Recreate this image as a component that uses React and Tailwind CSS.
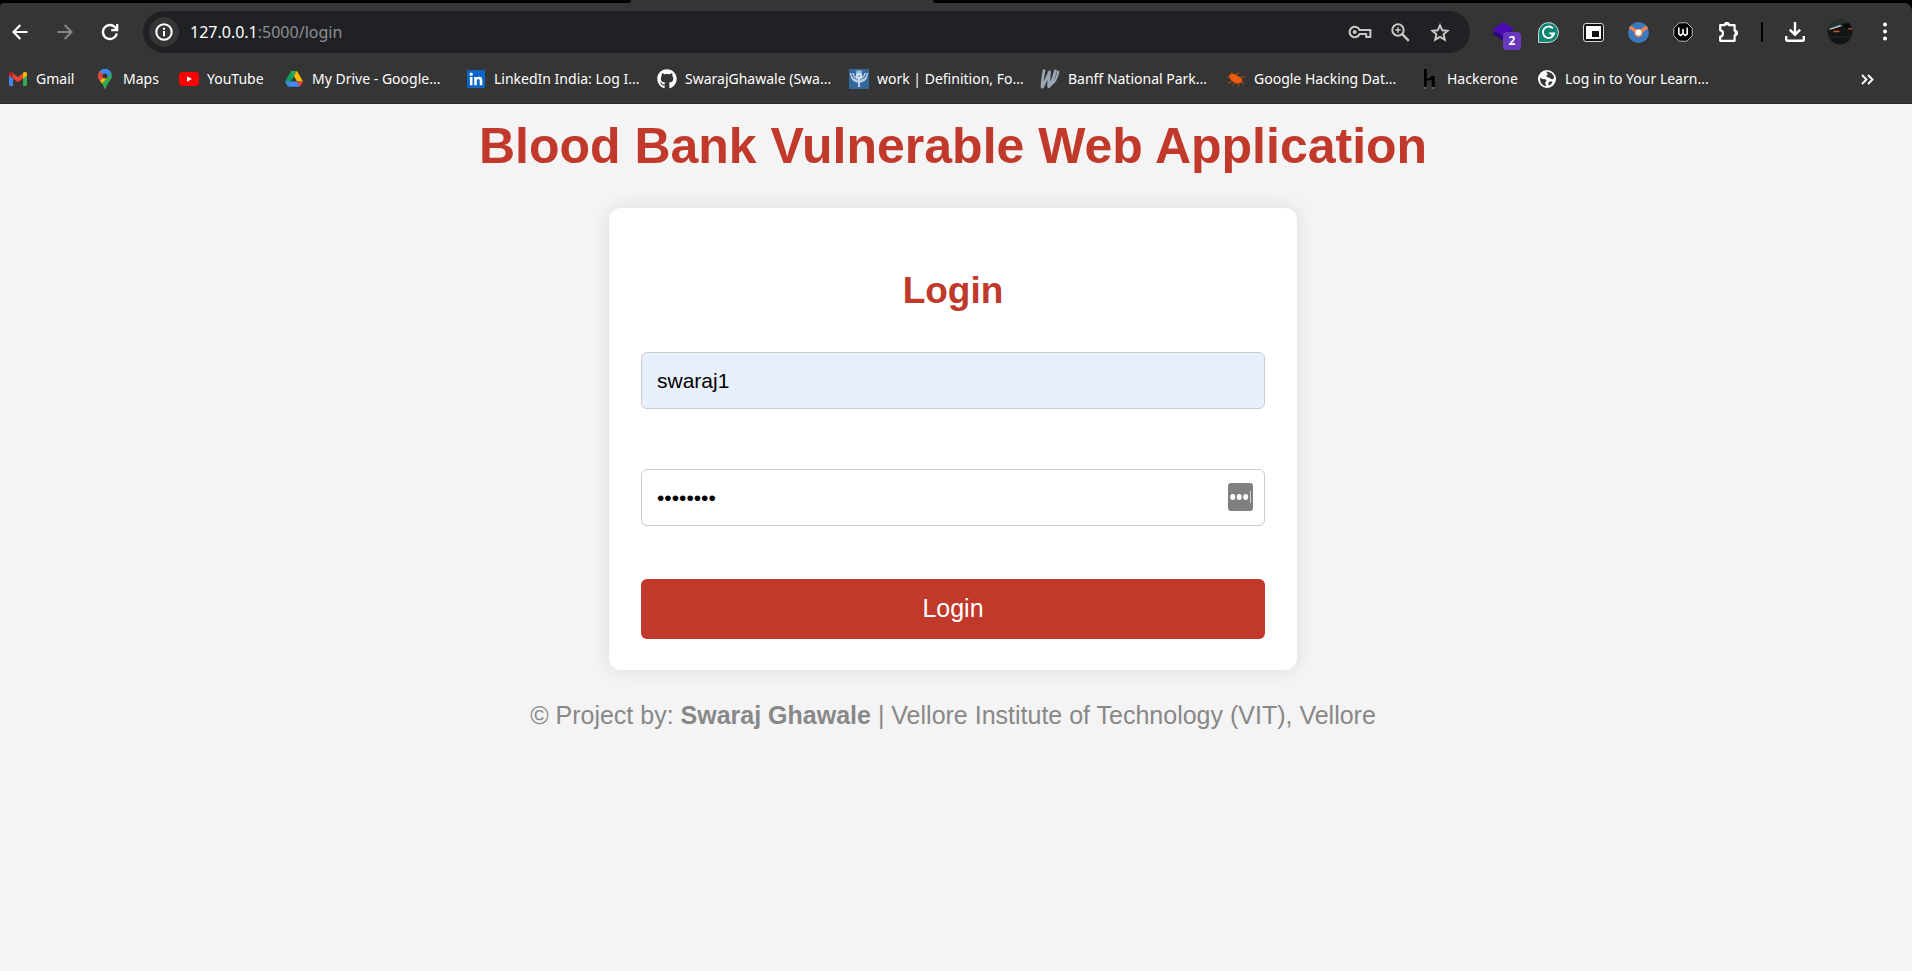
import React from "react";
import { FaGithub } from "react-icons/fa";

const BackIcon = () => (
  <svg width="16" height="16" viewBox="0 0 16 16" fill="none" stroke="#fff" strokeWidth="2.100">
    <path d="M15.500 8H2M8.300 1L1.400 8L8.300 15" />
  </svg>
);

const ForwardIcon = () => (
  <svg width="16" height="16" viewBox="0 0 16 16" fill="none" stroke="#868686" strokeWidth="2.100">
    <path d="M.5 8H14M7.700 1L14.600 8L7.700 15" />
  </svg>
);

const ReloadIcon = () => (
  <svg width="18" height="18" viewBox="0 0 18 18" fill="none" stroke="#fff" strokeWidth="2.400">
    <path d="M15.800 10.500A7 7 0 1 1 14.600 4.800L16 6.500" />
    <path d="M16.200 1V7.200H10.200" strokeWidth="2.200" />
  </svg>
);

const InfoIcon = () => (
  <svg width="18" height="18" viewBox="0 0 18 18" fill="none" stroke="#fff" strokeWidth="2">
    <circle cx="9" cy="9" r="7.700" />
    <path d="M9 8V13.200M9 4.700V6.700" />
  </svg>
);

const ZoomIcon = () => (
  <svg width="19" height="19" viewBox="0 0 19 19" fill="none" stroke="#c7c7c7" strokeWidth="2">
    <circle cx="7" cy="7" r="5.700" />
    <path d="M11.200 11.200L17.800 17.800" strokeWidth="2.400" />
    <path d="M7 4.300V9.700M4.300 7H9.700" strokeWidth="1.500" />
  </svg>
);

const StarIcon = () => (
  <svg width="20" height="19" viewBox="0 0 20 19" fill="none" stroke="#c7c7c7" strokeWidth="2">
    <path d="M10 2.300L12.300 7.300L17.500 7.800L13.600 11.300L14.800 16.700L10 13.800L5.200 16.700L6.400 11.300L2.500 7.800L7.700 7.300Z" />
  </svg>
);

const MenuIcon = () => (
  <svg width="6" height="20" viewBox="0 0 6 20" fill="#fff">
    <circle cx="3" cy="2.500" r="2" />
    <circle cx="3" cy="9.500" r="2" />
    <circle cx="3" cy="16.500" r="2" />
  </svg>
);

const KeyIcon = () => (
  <svg width="24" height="14" viewBox="0 0 24 14" fill="none" stroke="#c7c7c7" strokeWidth="2.100">
    <path d="M11.600 5H22.400V12H18.200V9H11.600A5.200 5.200 0 1 1 11.600 5Z" strokeLinejoin="round" />
    <circle cx="6.700" cy="7" r="2" fill="#c7c7c7" stroke="none" />
  </svg>
);

const GmailIcon = () => (
  <svg width="18" height="14" viewBox="0 0 18 14">
    <path d="M0 2.200V12.800C0 13.500.5 14 1.200 14H4V6.200Z" fill="#4285f4" />
    <path d="M18 2.200V12.800C18 13.500 17.500 14 16.800 14H14V6.200Z" fill="#34a853" />
    <path d="M14 1.500V6.600L18 3.600V2C18 .1 15.900-.8 14.400.4Z" fill="#fbbc04" />
    <path d="M4 6.600V1.300L9 5L14 1.300V6.600L9 10.300Z" fill="#ea4335" />
    <path d="M0 2V3.600L4 6.600V1.300L3.600.4C2.100-.8 0 .1 0 2Z" fill="#c5221f" />
  </svg>
);

const MapsIcon = () => (
  <svg width="14" height="20" viewBox="0 0 14 20">
    <defs>
      <clipPath id="pin">
        <path d="M7 0A7 7 0 0 0 0 7C0 11 4.500 13 5.900 18.500C6.200 20.300 7.800 20.300 8.100 18.500C9.500 13 14 11 14 7A7 7 0 0 0 7 0Z" />
      </clipPath>
    </defs>
    <g clipPath="url(#pin)">
      <rect width="14" height="20" fill="#34a853" />
      <path d="M0 14L11.500 1.500L14 0V-1H0Z" fill="#4285f4" />
      <path d="M0 1L7 7L1 14H-1Z" fill="#ea4335" />
      <path d="M1.500 12.800L9.500 3.500L10.500 7L3.500 15Z" fill="#fbbc04" />
      <path d="M2 2L10 -1L14 3.500L8.500 9L4.500 4.500Z" fill="#4285f4" />
    </g>
    <circle cx="7" cy="7" r="2.500" fill="#353535" />
  </svg>
);

const YouTubeIcon = () => (
  <svg width="20" height="14" viewBox="0 0 20 14">
    <rect width="20" height="14" rx="3.500" fill="#ff0000" />
    <path d="M8 4.200L13 7L8 9.800Z" fill="#fff" />
  </svg>
);

const DriveIcon = () => (
  <svg width="18" height="16" viewBox="0 0 18 16">
    <path d="M6 0L0 10.500L3 15.700L9 5.200Z" fill="#0f9d58" />
    <path d="M12 0L18 10.500H12L6 0Z" fill="#ffba00" />
    <path d="M6 0H12L9 5.200Z" fill="#34a853" />
    <path d="M0 10.500H5.900L3 15.700Z" fill="#4285f4" />
    <path d="M5.900 10.500H12.100L15 15.700H3Z" fill="#4688f4" />
    <path d="M12.100 10.500H18L15 15.700Z" fill="#ea4335" />
  </svg>
);

const LinkedInIcon = () => (
  <svg width="18" height="18" viewBox="0 0 18 18">
    <rect width="18" height="18" rx="1" fill="#0a66c2" />
    <circle cx="4.200" cy="4.200" r="1.600" fill="#fff" />
    <path d="M2.900 7H5.500V15.200H2.900ZM7.200 7H9.700V8.100C10.200 7.300 11.100 6.800 12.200 6.800C14.700 6.800 15.300 8.400 15.300 10.700V15.200H12.700V11.200C12.700 10.100 12.600 9.100 11.400 9.100C10.100 9.100 9.800 10 9.800 11.100V15.200H7.200Z" fill="#fff" />
  </svg>
);

const ThistleIcon = () => (
  <svg width="20" height="20" viewBox="0 0 20 20">
    <rect width="20" height="20" fill="#336699" />
    <g fill="none" stroke="#b9cfe6" strokeWidth="1.500">
      <path d="M1.500 4C2 9 5 11 9 11.500M2.500 8C3.500 11.500 6 12.500 9 13M18.500 4C18 9 15 11 11 11.500M17.500 8C16.500 11.500 14 12.500 11 13" />
      <path d="M4 4C4.300 7 5.500 8 7.500 9M16 4C15.700 7 14.500 8 12.500 9" />
      <path d="M10 9V18" strokeWidth="2.200" />
    </g>
    <path d="M6.500 2L10 1L13.500 2L12.500 5H7.500Z" fill="#8fb1d4" />
    <circle cx="10" cy="7" r="3.200" fill="#d5e3f1" />
    <circle cx="10" cy="7" r="1.300" fill="#86a9cc" />
  </svg>
);

const BanffIcon = () => (
  <svg width="20" height="20" viewBox="0 0 20 20" fill="none" stroke="#9aa7b5" strokeLinecap="round" strokeLinejoin="round">
    <path d="M4 1.500C3 7 2 13 2 18" strokeWidth="2.600" />
    <path d="M2.500 18C5 13 7.500 8 9.500 3C9 9 8.500 13 8.800 17.500" strokeWidth="2.800" />
    <path d="M9 17.500C12 13 14.500 7 15.500 1.800" strokeWidth="2.800" />
    <path d="M9.500 17C14 14 17.500 8 18.300 2.500" strokeWidth="2.200" />
  </svg>
);

const BugIcon = () => (
  <svg width="20" height="18" viewBox="0 0 20 18">
    <path d="M3.500 5C5 3 8 3.500 10.500 5L15.500 8.500C17 10 16.500 12 14.500 13C11.500 14 8 13 5.500 10.500C3.500 8.500 2.800 6.500 3.500 5Z" fill="#ee5a0c" />
    <path d="M6 4L5.500 1.500M10 5L13 2.500M14 7.500L19 6.500M4 8L1 7M6 11L2 13.500M9 12.500L6.500 15.500M12 13L13 16.500M15.500 11.500L18 14" fill="none" stroke="#a3481a" strokeWidth="1.100" />
  </svg>
);

const HackerOneIcon = () => (
  <svg width="11" height="20" viewBox="0 0 11 20">
    <path d="M0 0H2.800V18H0ZM5 9.500L8 7H10.700V18H7.700V10.500L5 11.500ZM2.800 9.500H6V11.500H2.800Z" fill="#000" />
    <path d="M0 19H2.500M7.800 19H10.500" stroke="#8a8a8a" />
  </svg>
);

const GlobeIcon = () => (
  <svg width="18" height="18" viewBox="0 0 18 18">
    <circle cx="9" cy="9" r="9" fill="#fff" />
    <path d="M2 7.500C3.500 8.500 4.500 9.500 7 9.200C9 9.200 8.800 11 7.800 11.500C6.500 12.500 7.500 14.500 8.500 16.300C5 16.300 1.500 12.500 2 7.500ZM8 1.800C12 1.500 15.500 4 16.200 7.500C15 9.500 13.500 9.800 12.500 8.500C11.500 7.500 10 7.500 8.800 7C7.800 6.500 8.500 5.300 9.500 4.800C10.300 4.200 9 3 8 1.800ZM11.500 11.500H14.500C14 13.500 12.500 15 11 15.500C10 14.500 10.200 12.500 11.500 11.500Z" fill="#353535" />
  </svg>
);

const LayersIcon = () => (
  <svg width="21" height="20" viewBox="0 0 21 20">
    <path d="M0 11L10.500 5L21 11V12L10.500 19L0 12.500Z" fill="#2a0a78" />
    <path d="M10.500 0L21 7L10.500 14L0 8V7Z" fill="#4b0bb5" />
  </svg>
);

const GrammarlyIcon = () => (
  <svg width="21" height="21" viewBox="0 0 21 21">
    <path d="M10.500.6A9.900 9.900 0 1 1 10.500 20.400H.6V10.500A9.900 9.900 0 0 1 10.500.6Z" fill="#0b8573" stroke="#d4dedc" strokeWidth="1" />
    <path d="M14.800 6.400A5.700 5.700 0 1 0 16.200 11.400H11.200M13.600 13.800L16.200 11.300" fill="none" stroke="#fff" strokeWidth="1.900" />
  </svg>
);

const PipIcon = () => (
  <svg width="21" height="19" viewBox="0 0 21 19">
    <rect x=".5" y=".5" width="20" height="18" rx="2.500" fill="#111" stroke="#d8d8d8" />
    <rect x="3" y="3" width="15" height="13" fill="#fff" />
    <rect x="9" y="8" width="7" height="6" fill="#111" />
  </svg>
);

const OrbitIcon = () => (
  <svg width="21" height="21" viewBox="0 0 21 21">
    <circle cx="10.500" cy="10.500" r="10.500" fill="#3c78bd" />
    <path d="M.8 6.200L3 3.700L8 7.200H13L18 3.700L20.200 6.200L14.800 10L14 13.500L10.500 15.500L7 13.500L6.200 10Z" fill="#ff8547" />
    <circle cx="10.500" cy="10.500" r="3" fill="#fff" />
  </svg>
);

const WaveIcon = () => (
  <svg width="20" height="20" viewBox="0 0 20 20">
    <path d="M6.200.8H13.800L19.200 6.200V13.800L13.800 19.200H6.200L.8 13.800V6.200Z" fill="#000" stroke="#b5b5b5" strokeLinejoin="round" />
    <path d="M5.800 5.500V12L7.800 13.500L10 11.500L12.200 13.500L14.200 12V5.500M10 7V11.500" fill="none" stroke="#fff" strokeWidth="1.600" />
  </svg>
);

const PuzzleIcon = () => (
  <svg width="21" height="21" viewBox="0 0 21 21">
    <path d="M2.200 3.200H6.700A2.200 2.200 0 0 1 11.100 3.200H16.600V8.700A2.400 2.400 0 0 1 16.600 13.500V18.800H2.200V14.500C5.800 14.500 5.800 8.300 2.200 8.300Z" fill="none" stroke="#fff" strokeWidth="2.200" strokeLinejoin="round" />
    <path d="M7 3.200A2 2.200 0 0 1 11 3.200ZM16.600 9A2 2 0 0 1 16.600 13.200Z" fill="#fff" />
  </svg>
);

const DownloadIcon = () => (
  <svg width="20" height="20" viewBox="0 0 20 20" fill="none" stroke="#fff" strokeWidth="2.400">
    <path d="M10 0V12.500M4.800 7.700L10 12.900L15.200 7.700M1.200 14V17.300C1.200 18.200 1.800 18.800 2.700 18.800H17.300C18.200 18.800 18.800 18.200 18.800 17.300V14" />
  </svg>
);

const AvatarIcon = () => (
  <svg width="26" height="26" viewBox="0 0 26 26">
    <defs>
      <clipPath id="face">
        <circle cx="13" cy="13" r="12.500" />
      </clipPath>
    </defs>
    <g clipPath="url(#face)">
      <rect width="26" height="26" fill="#131615" />
      <path d="M0 0H26V5L20 8L13 6L4 10L0 11Z" fill="#26322e" />
      <path d="M3 9.500L13 6L15 7L9 9L2 11Z" fill="#c3c9c8" />
      <path d="M15 5L22 4L25 9L18 8.500Z" fill="#070808" />
      <path d="M6.500 12.500H12.500M21 9.800H25" stroke="#c4532a" strokeWidth="1.300" />
      <path d="M2 19C8 17 18 19 25 17" stroke="#1f2322" strokeWidth="1.500" fill="none" />
    </g>
  </svg>
);

const MoreBookmarksIcon = () => (
  <svg width="13" height="11" viewBox="0 0 13 11" fill="none" stroke="#fff" strokeWidth="1.900">
    <path d="M1 1L5.500 5.500L1 10M7 1L11.500 5.500L7 10" />
  </svg>
);

const bookmarks = [
  { label: "Gmail", Icon: GmailIcon, width: "w-[87px]" },
  { label: "Maps", Icon: MapsIcon, width: "w-[84px]" },
  { label: "YouTube", Icon: YouTubeIcon, width: "w-[105px]" },
  { label: "My Drive - Google...", Icon: DriveIcon, width: "w-[182px]" },
  { label: "LinkedIn India: Log I...", Icon: LinkedInIcon, width: "w-[191px]" },
  { label: "SwarajGhawale (Swa...", Icon: () => <FaGithub size={20} />, width: "w-[192px]" },
  { label: "work | Definition, Fo...", Icon: ThistleIcon, width: "w-[191px]" },
  { label: "Banff National Park...", Icon: BanffIcon, width: "w-[186px]" },
  { label: "Google Hacking Dat...", Icon: BugIcon, width: "w-[193px]" },
  { label: "Hackerone", Icon: HackerOneIcon, width: "w-[118px]" },
  { label: "Log in to Your Learn...", Icon: GlobeIcon, width: "w-[191px]" },
];

const extensions = [
  { label: "Grammarly", Icon: GrammarlyIcon },
  { label: "Picture in picture", Icon: PipIcon },
  { label: "Orbit", Icon: OrbitIcon },
  { label: "Wave", Icon: WaveIcon },
  { label: "Extensions", Icon: PuzzleIcon },
];

function BarButton({ label, children }) {
  return (
    <button
      type="button"
      aria-label={label}
      className="relative flex size-10 shrink-0 items-center justify-center rounded-full"
    >
      {children}
    </button>
  );
}

function BrowserBar() {
  return (
    <header className="bg-black font-['Noto_Sans','Segoe_UI',sans-serif] text-white">
      <div className="flex h-[3px] bg-[#353535]">
        <div className="w-[33%] rounded-br-lg bg-black" />
        <div className="w-[302px]" />
        <div className="flex-1 rounded-bl-lg bg-black" />
      </div>

      <div className="rounded-tl-sm rounded-tr-lg bg-[#353535]">
        <div className="flex items-center gap-[5px] pt-2 pr-[7px]">
          <BarButton label="Back">
            <BackIcon />
          </BarButton>
          <BarButton label="Forward">
            <ForwardIcon />
          </BarButton>
          <BarButton label="Reload">
            <ReloadIcon />
          </BarButton>

          <div className="mx-2 flex h-[42px] min-w-0 flex-1 items-center rounded-full bg-[#202124] pr-2.5 pl-1.5">
            <button
              type="button"
              aria-label="Site information"
              className="flex size-[30px] shrink-0 items-center justify-center rounded-full bg-[#353535]"
            >
              <InfoIcon />
            </button>
            <a href="#login" className="ml-[11px] min-w-0 flex-1 truncate text-base">
              127.0.0.1<span className="text-[#8b8d90]">:5000/login</span>
            </a>
            <BarButton label="Manage passwords">
              <KeyIcon />
            </BarButton>
            <BarButton label="Zoom">
              <ZoomIcon />
            </BarButton>
            <BarButton label="Bookmark this page">
              <StarIcon />
            </BarButton>
          </div>

          <BarButton label="Layers">
            <LayersIcon />
            <span className="absolute right-0.5 bottom-0.5 flex h-[18px] w-[18px] items-center justify-center rounded bg-[#6938bd] text-xs font-bold">
              2
            </span>
          </BarButton>
          {extensions.map(({ label, Icon }) => (
            <BarButton key={label} label={label}>
              <Icon />
            </BarButton>
          ))}
          <div className="mr-[7px] ml-2 h-5 w-0.5 bg-black" />
          <BarButton label="Downloads">
            <DownloadIcon />
          </BarButton>
          <BarButton label="Profile">
            <AvatarIcon />
          </BarButton>
          <BarButton label="Menu">
            <MenuIcon />
          </BarButton>
        </div>

        <nav aria-label="Bookmarks" className="flex h-[51px] items-center border-b border-[#2a2a2a] pt-0.5 pr-[38px] pl-2 text-sm">
          {bookmarks.map(({ label, Icon, width }) => (
            <a key={label} href="#bookmark" className={`flex shrink-0 items-center gap-2 ${width}`}>
              <span className="flex w-5 shrink-0 justify-center">
                <Icon />
              </span>
              <span className="whitespace-nowrap">{label}</span>
            </a>
          ))}
          <button type="button" aria-label="More bookmarks" className="ml-auto">
            <MoreBookmarksIcon />
          </button>
        </nav>
      </div>
    </header>
  );
}

export default function App() {
  return (
    <div className="min-h-screen bg-[#f4f4f4] font-['Liberation_Sans',Arial,sans-serif]">
      <BrowserBar />

      <main className="flex flex-col items-center pt-3.5 pr-1.5">
        <h1 className="text-[50px] leading-[56px] font-bold text-[#c0392b]">
          Blood Bank Vulnerable Web Application
        </h1>

        <form
          className="mt-[34px] flex w-full max-w-[688px] flex-col rounded-xl bg-white px-8 pt-[62px] pb-[31px] shadow-[0_0_20px_rgba(0,0,0,0.1)]"
          onSubmit={(event) => event.preventDefault()}
        >
          <h2 className="text-center text-[37px] leading-[42px] font-bold text-[#c0392b]">Login</h2>

          <input
            type="text"
            aria-label="Username"
            defaultValue="swaraj1"
            className="mt-10 h-[57px] rounded-md border border-[#ccc] bg-[#e8f0fe] px-[15px] text-[21px] text-black outline-none"
          />

          <div className="relative mt-[60px]">
            <input
              type="password"
              aria-label="Password"
              defaultValue="password"
              className="block h-[57px] w-full rounded-md border border-[#ccc] bg-white px-[15px] text-[21px] text-black outline-none"
            />
            <button type="button" aria-label="Fill password" className="absolute top-3.5 right-3">
              <svg width="25" height="28" viewBox="0 0 25 28">
                <rect width="25" height="28" rx="3" fill="#808080" />
                <ellipse cx="4.700" cy="14" rx="2.500" ry="3" fill="#fff" />
                <ellipse cx="11.200" cy="14" rx="2.500" ry="3" fill="#fff" />
                <ellipse cx="17.700" cy="14" rx="2.500" ry="3" fill="#fff" />
                <path d="M22.500 8V20" stroke="#d0d0d0" />
              </svg>
            </button>
          </div>

          <button type="submit" className="mt-[53px] h-[60px] rounded-md bg-[#c0392b] text-[25px] text-white">
            Login
          </button>
        </form>

        <footer className="mt-[31px] text-[25px] leading-7 text-[#888]">
          © Project by: <strong className="font-bold">Swaraj Ghawale</strong> | Vellore Institute of Technology
          (VIT), Vellore
        </footer>
      </main>
    </div>
  );
}
